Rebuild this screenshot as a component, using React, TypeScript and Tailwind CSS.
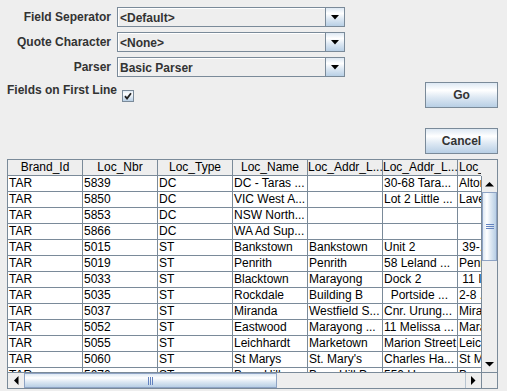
import React from "react";

const headers = [
  "Brand_Id",
  "Loc_Nbr",
  "Loc_Type",
  "Loc_Name",
  "Loc_Addr_L...",
  "Loc_Addr_L...",
  "Loc_Subu...",
];

const rows: string[][] = [
  ["TAR", "5839", "DC", "DC - Taras ...", "", "30-68 Tara...", "Altona ..."],
  ["TAR", "5850", "DC", "VIC West A...", "", "Lot 2 Little ...", "Laverton..."],
  ["TAR", "5853", "DC", "NSW North...", "", "", ""],
  ["TAR", "5866", "DC", "WA Ad Sup...", "", "", ""],
  ["TAR", "5015", "ST", "Bankstown", "Bankstown", "Unit 2", " 39-..."],
  ["TAR", "5019", "ST", "Penrith", "Penrith", "58 Leland ...", "Penrith"],
  ["TAR", "5033", "ST", "Blacktown", "Marayong", "Dock 2", " 11 Int..."],
  ["TAR", "5035", "ST", "Rockdale", "Building B", "  Portside ...", "2-8 ..."],
  ["TAR", "5037", "ST", "Miranda", "Westfield S...", "Cnr. Urung...", "Miranda"],
  ["TAR", "5052", "ST", "Eastwood", "Marayong ...", "11 Melissa ...", "Marayong"],
  ["TAR", "5055", "ST", "Leichhardt", "Marketown", "Marion Street", "Leichhardt"],
  ["TAR", "5060", "ST", "St Marys", "St. Mary's", "Charles Ha...", "St Marys"],
  ["TAR", "5070", "ST", "Bass Hill", "Bass Hill P...", "550 H...", "Bass Hill"],
];

function Combo({ text }: { text: string }) {
  return (
    <div className="flex h-[20px] w-[228px] border border-[#7a8a99]">
      <div className="flex-1 flex items-center pl-[1px] bg-[#eeeeee] border-t border-l border-white font-bold text-[#333333] leading-[18px] whitespace-pre">
        {text}
      </div>
      <div className="w-[19px] border-l border-[#7a8a99] bg-[linear-gradient(to_bottom,#dde8f3,#ffffff_30%,#dde8f3_60%,#b8cfe5)] flex items-center justify-center">
        <svg width="8" height="5" viewBox="0 0 8 5">
          <polygon points="0,0 8,0 4,4.5" fill="#000" />
        </svg>
      </div>
    </div>
  );
}

function Row({ label, text }: { label: string; text: string }) {
  return (
    <div className="flex items-center h-[20px]">
      <div className="w-[111px] text-right font-bold text-[#333333] leading-[20px] whitespace-pre">
        {label}
      </div>
      <div className="ml-[6px]">
        <Combo text={text} />
      </div>
    </div>
  );
}

function Btn({ children }: { children: React.ReactNode }) {
  return (
    <div className="w-[73px] h-[26px] border border-[#7a8a99] bg-[linear-gradient(to_bottom,#dde8f3,#ffffff_30%,#dde8f3_60%,#b8cfe5)] flex items-center justify-center font-bold text-[#333333]">
      {children}
    </div>
  );
}

export default function App() {
  return (
    <div className="w-[507px] h-[391px] bg-[#eeeeee] flex flex-col overflow-hidden font-['Liberation_Sans',Arial,sans-serif] text-[12px]">
      <div className="flex h-[159px] shrink-0">
        <div className="w-[425px] pt-[7px] flex flex-col">
          <div className="flex flex-col gap-[5px]">
            <Row label="Field Seperator" text="<Default>" />
            <Row label="Quote Character" text="<None>" />
            <Row label="Parser" text="Basic Parser" />
          </div>
          <div className="flex mt-[3px] h-[22px]">
            <div className="w-[111px] pl-[7px] font-bold text-[#333333] leading-[20px] whitespace-pre">
              Fields on First Line
            </div>
            <div className="ml-[11px] mt-[10px] w-[12px] h-[12px] border border-[#7a8a99] bg-[linear-gradient(to_bottom,#dde8f3,#ffffff_30%,#dde8f3_60%,#b8cfe5)] flex items-center justify-center">
              <svg width="10" height="10" viewBox="0 0 10 10">
                <path d="M2 5.2 L4 7.6 L8 2.2" stroke="#222" strokeWidth="1.8" fill="none" />
              </svg>
            </div>
          </div>
        </div>
        <div className="flex flex-col pt-[82px] gap-[20px]">
          <Btn>Go</Btn>
          <Btn>Cancel</Btn>
        </div>
      </div>

      <div className="ml-[7px] w-[491px] h-[230px] shrink-0 border border-[#7a8a99] flex flex-col bg-white">
        {/* header */}
        <div className="flex h-[16px] shrink-0 bg-[#eeeeee]">
          <div className="w-[473px] flex overflow-hidden">
            {headers.map((h, i) => (
              <div
                key={i}
                className={
                  "w-[75px] h-[16px] shrink-0 border-r border-b border-[#7a8a99] leading-[15px] whitespace-pre overflow-hidden text-black " +
                  (i === 6 ? "text-left pl-[1px]" : "text-center")
                }
              >
                {h}
              </div>
            ))}
          </div>
          <div className="w-[16px] border-b border-[#eeeeee]" />
        </div>
        {/* body */}
        <div className="flex h-[196px] shrink-0">
          <div className="w-[473px] overflow-hidden flex flex-col">
            {rows.map((r, ri) => (
              <div key={ri} className="flex shrink-0">
                {r.map((c, ci) => (
                  <div
                    key={ci}
                    className="w-[75px] h-[16px] shrink-0 border-r border-b border-[#7a8a99] pl-[1px] leading-[15px] whitespace-pre overflow-hidden text-black"
                  >
                    {c}
                  </div>
                ))}
              </div>
            ))}
          </div>
          <div className="w-[16px] flex flex-col border-l border-[#7a8a99] bg-[#eeeeee]">
            <div className="h-[16px] shrink-0 flex items-center justify-center">
              <svg width="9" height="5" viewBox="0 0 9 5">
                <polygon points="0,4.5 9,4.5 4.5,0" fill="#000" />
              </svg>
            </div>
            <div className="h-[69px] shrink-0 border border-[#8ea3c4] bg-[linear-gradient(to_right,#dde8f3,#ffffff_30%,#dde8f3_60%,#b8cfe5)] flex flex-col items-center justify-center gap-[1px]">
              <div className="w-[8px] h-[1px] bg-[#6382bf]" />
              <div className="w-[8px] h-[1px] bg-[#6382bf]" />
              <div className="w-[8px] h-[1px] bg-[#6382bf]" />
            </div>
            <div className="flex-1" />
            <div className="h-[16px] shrink-0 flex items-center justify-center">
              <svg width="9" height="5" viewBox="0 0 9 5">
                <polygon points="0,0 9,0 4.5,4.5" fill="#000" />
              </svg>
            </div>
          </div>
        </div>
        {/* horizontal scrollbar */}
        <div className="flex h-[16px] shrink-0 bg-[#eeeeee]">
          <div className="w-[473px] flex border-t border-[#7a8a99]">
            <div className="w-[16px] shrink-0 flex items-center justify-center">
              <svg width="5" height="9" viewBox="0 0 5 9">
                <polygon points="4.5,0 4.5,9 0,4.5" fill="#000" />
              </svg>
            </div>
            <div className="w-[253px] shrink-0 border border-[#8ea3c4] bg-[linear-gradient(to_bottom,#dde8f3,#ffffff_30%,#dde8f3_60%,#b8cfe5)] flex items-center justify-center gap-[1px]">
              <div className="w-[1px] h-[8px] bg-[#6382bf]" />
              <div className="w-[1px] h-[8px] bg-[#6382bf]" />
              <div className="w-[1px] h-[8px] bg-[#6382bf]" />
            </div>
            <div className="flex-1" />
            <div className="w-[16px] shrink-0 border-l border-[#b8c4d0] flex items-center justify-center">
              <svg width="5" height="9" viewBox="0 0 5 9">
                <polygon points="0,0 0,9 4.5,4.5" fill="#000" />
              </svg>
            </div>
          </div>
          <div className="w-[16px] border-t border-l border-[#7a8a99]" />
        </div>
      </div>
    </div>
  );
}
